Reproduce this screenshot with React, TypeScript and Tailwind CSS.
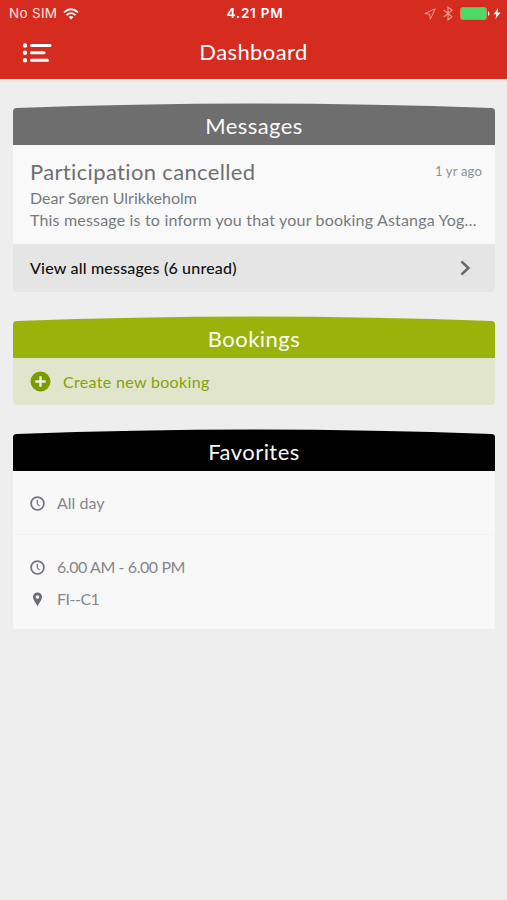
import React from "react";

function CardHeader({ title, className }: { title: string; className: string }) {
  return (
    <div className={className}>
      {/* curved top edge */}
      <svg className="block w-full h-[12px]" viewBox="0 0 482 12" preserveAspectRatio="none" fill="currentColor">
        <path d="M0 12V8.5Q0 5.2 3.5 5Q241 -4.2 478.5 5Q482 5.2 482 8.5V12Z" />
      </svg>
      <div className="h-[30px] bg-current">
        <h2 className="text-center text-[22px] leading-[22px] tracking-[0.45px] text-[#fafafa]">{title}</h2>
      </div>
    </div>
  );
}

function ClockIcon() {
  return (
    <svg className="w-[15px] h-[15px] shrink-0" viewBox="0 0 15 15" fill="none" stroke="#75777c" strokeLinecap="round">
      <circle cx="7.5" cy="7.5" r="6.4" strokeWidth="1.8" />
      <path d="M7.3 4v3.8l2 2" strokeWidth="1.2" />
    </svg>
  );
}

function PinIcon() {
  return (
    <svg className="w-[15px] h-[15px] shrink-0" viewBox="0 0 15 15" fill="#6b6d73">
      <path
        fillRule="evenodd"
        d="M7.5 0.6C4.9 0.6 3 2.5 3 5c0 3.1 3.2 6.2 4.5 9.6C8.8 11.2 12 8.1 12 5c0-2.5-1.9-4.4-4.5-4.4Zm0 2.7a1.8 1.8 0 1 1 0 3.6a1.8 1.8 0 0 1 0-3.6Z"
      />
    </svg>
  );
}

function StatusBar() {
  return (
    <div className="grid grid-cols-3 items-center h-[27px] pl-[9px] pr-[6px] font-['Inter',sans-serif] text-[13px]">
      <div className="flex items-center gap-[6px]">
        <span className="text-[13.5px] tracking-[0.3px] text-[#fbe3e0]">No SIM</span>
        <svg className="w-[16px] h-[12px]" viewBox="0 0 16 12" fill="none" stroke="#fff" strokeWidth="1.8">
          <path d="M1 4.3Q8 -1.9 15 4.3" />
          <path d="M3.5 7.1Q8 3.2 12.5 7.1" />
          <path d="M8 11.5L5.6 9Q8 7 10.4 9Z" fill="#fff" stroke="none" />
        </svg>
      </div>
      <span className="text-center text-[13.5px] font-semibold tracking-[0.8px]">4.21 PM</span>
      <div className="flex items-center justify-end">
        <svg className="w-[12px] h-[12px] mr-[7px]" viewBox="0 0 12 12" fill="none" stroke="#ef9a92" strokeWidth="1">
          <path d="M11.2 0.8L0.8 5.6L5.6 6.2L6.3 11.2Z" strokeLinejoin="round" />
        </svg>
        <svg className="w-[10px] h-[15px] mr-[7px]" viewBox="0 0 10 15" fill="none" stroke="#ef9a92" strokeWidth="1.1">
          <path d="M0.7 4L9 10.8L5 14V1L9 4.2L0.7 11" />
        </svg>
        <svg className="w-[31px] h-[13px]" viewBox="0 0 31 13">
          <rect x="0.5" y="0.5" width="26" height="12" rx="2" fill="#4cd964" stroke="#d9805c" strokeWidth="1" />
          <path d="M28 4Q31 6.5 28 9Z" fill="#fff" />
        </svg>
        <svg className="w-[8px] h-[11px] ml-[2px]" viewBox="0 0 8 11" fill="#fff">
          <path d="M5.2 0L0.5 6.2H3.4L2.4 11L7.5 4.6H4.4Z" />
        </svg>
      </div>
    </div>
  );
}

export default function App() {
  return (
    <div className="w-[507px] h-[900px] overflow-hidden bg-[#eeeeee] font-['Lato',sans-serif]">
      <header className="h-[79px] bg-[#d62b1f] text-white">
        <StatusBar />
        <div className="grid grid-cols-[60px_1fr_60px] items-center h-[50px]">
          <button className="pl-[22px]" aria-label="Menu">
            <svg className="w-[30px] h-[21px]" viewBox="0 0 30 21" fill="none" stroke="#fff" strokeWidth="3" strokeLinecap="round">
              <path d="M9.5 3.5H28M9.5 10.8H22M9.5 18.2H25.5" />
              <path d="M3 3.5h0.01M3 10.8h0.01M3 18.2h0.01" strokeWidth="4.4" />
            </svg>
          </button>
          <h1 className="text-center text-[22px] leading-[28px] tracking-[0.4px]">Dashboard</h1>
        </div>
      </header>

      <main className="flex flex-col gap-[24px] pt-[24px] pl-[13px] pr-[12px]">
        {/* Messages */}
        <section>
          <CardHeader title="Messages" className="text-[#6e6e6e]" />
          <div className="h-[99px] bg-[#f9f9f9] pt-[12px] pl-[17px] pr-[13px] text-[#777a7d]">
            <div className="flex items-center justify-between h-[29px]">
              <h3 className="pb-[1px] text-[22px] tracking-[0.35px] text-[#707070]">Participation cancelled</h3>
              <span className="pt-[1px] text-[13px] tracking-[0.2px] text-[#8e9193]">1 yr ago</span>
            </div>
            <p className="text-[16px] leading-[24px]">Dear Søren Ulrikkeholm</p>
            <p className="text-[16px] leading-[20px] tracking-[0.18px] whitespace-nowrap">
              This message is to inform you that your booking Astanga Yog…
            </p>
          </div>
          <button className="flex w-full items-center justify-between h-[48px] rounded-b-[4px] bg-[#e5e5e5] pl-[17px] pr-[24px]">
            <span className="text-[16px] font-medium tracking-[0.19px] text-[#111]">View all messages (6 unread)</span>
            <svg className="w-[11px] h-[16px]" viewBox="0 0 11 16" fill="none" stroke="#66686c" strokeWidth="2.4">
              <path d="M1.5 1.5L8.5 8L1.5 14.5" />
            </svg>
          </button>
        </section>

        {/* Bookings */}
        <section>
          <CardHeader title="Bookings" className="text-[#9ab30b]" />
          <button className="flex w-full items-center gap-[12px] h-[47px] rounded-b-[4px] bg-[#e0e5cb] pl-[17px]">
            <svg className="w-[21px] h-[21px]" viewBox="0 0 21 21">
              <circle cx="10.5" cy="10.5" r="10" fill="#7b9a06" />
              <path d="M10.5 5.3v10.4M5.3 10.5h10.4" stroke="#eef2dc" strokeWidth="2.4" />
            </svg>
            <span className="text-[16px] tracking-[0.33px] text-[#86a00f]">Create new booking</span>
          </button>
        </section>

        {/* Favorites */}
        <section>
          <CardHeader title="Favorites" className="text-black" />
          <div className="bg-[#f8f8f8] text-[16px] text-[#85878a]">
            <div className="flex items-center gap-[12px] h-[64px] pt-[1px] pl-[17px] border-b border-[#f3f3f3]">
              <ClockIcon />
              <span>All day</span>
            </div>
            <div className="flex flex-col h-[94px] pt-[16px] pl-[17px]">
              <div className="flex items-center gap-[12px] h-[32px]">
                <ClockIcon />
                <span className="tracking-[-0.42px]">6.00 AM - 6.00 PM</span>
              </div>
              <div className="flex items-center gap-[12px] h-[32px]">
                <PinIcon />
                <span className="tracking-[-0.5px]">FI--C1</span>
              </div>
            </div>
          </div>
        </section>
      </main>
    </div>
  );
}
